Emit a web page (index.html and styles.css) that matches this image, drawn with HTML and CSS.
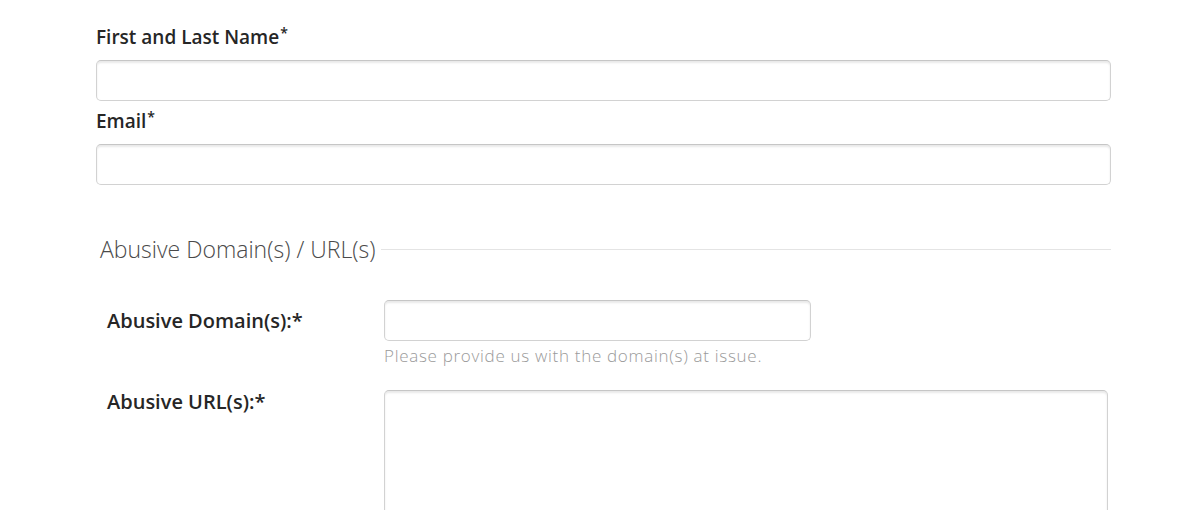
FILE: index.html
```html
<!DOCTYPE html>
<html>
<head>
<meta charset="utf-8">
<link rel="stylesheet" href="styles.css">
</head>
<body>
<form class="form">
  <div class="field">
    <label class="top-label">First and Last Name<sup>*</sup></label>
    <input class="input" type="text">
  </div>
  <div class="field">
    <label class="top-label">Email<sup>*</sup></label>
    <input class="input" type="text">
  </div>
  <fieldset class="set">
    <div class="legend"><span class="legend-text">Abusive Domain(s) / URL(s)</span><span class="legend-line"></span></div>
    <div class="row first">
      <label class="side-label">Abusive Domain(s):*</label>
      <div class="control">
        <input class="input short" type="text">
        <div class="help">Please provide us with the domain(s) at issue.</div>
      </div>
    </div>
    <div class="row">
      <label class="side-label tight">Abusive URL(s):*</label>
      <div class="control">
        <textarea class="input area"></textarea>
      </div>
    </div>
  </fieldset>
</form>
</body>
</html>
```
FILE: styles.css
```css
html, body {
  margin: 0;
  padding: 0;
  background: #fff;
  overflow: hidden;
}
body {
  font-family: "Open Sans", Lato, sans-serif;
  color: #222;
}
.form {
  padding: 25px 89px 0 96px;
  width: 1015px;
}
.field {
  display: flex;
  flex-direction: column;
}
.top-label {
  font-size: 19px;
  font-weight: 600;
  line-height: 24px;
  padding-bottom: 11px;
  color: #262626;
}
.top-label sup {
  font-size: 14px;
  line-height: 0;
  vertical-align: 6px;
  margin-left: 1px;
}
.input {
  box-sizing: border-box;
  height: 41px;
  width: 100%;
  border: 1px solid #d2d2d2;
  border-top-color: #c6c6c6;
  border-radius: 5px;
  box-shadow: inset 0 2px 2px rgba(0,0,0,0.09);
  background: #fff;
  margin: 0 0 8px 0;
  display: block;
  font: inherit;
}
.set {
  border: 0;
  margin: 0;
  padding: 0;
  min-width: 0;
}
.legend {
  display: flex;
  align-items: center;
  margin-top: 41px;
  padding-left: 4px;
  height: 30px;
}
.legend-text {
  font-size: 23px;
  font-weight: 300;
  color: #4a4a4a;
  white-space: nowrap;
}
.legend-line {
  flex: 1;
  height: 1px;
  background: #e4e4e4;
  margin-left: 6px;
}
.row {
  display: flex;
  padding-left: 11px;
}
.row.first {
  margin-top: 36px;
}
.side-label {
  width: 277px;
  flex: none;
  font-size: 20px;
  font-weight: 600;
  line-height: 24px;
  padding-top: 9px;
  color: #262626;
}
.side-label.tight {
  padding-top: 0;
}
.control {
  flex: 1;
}
.short {
  width: 427px;
  margin-bottom: 5px;
}
.help {
  font-size: 17px;
  font-weight: 300;
  letter-spacing: 0.7px;
  color: #9a9a9a;
  line-height: 20px;
  height: 44px;
}
.area {
  width: 724px;
  height: 130px;
  margin-bottom: 0;
  resize: none;
}
```
